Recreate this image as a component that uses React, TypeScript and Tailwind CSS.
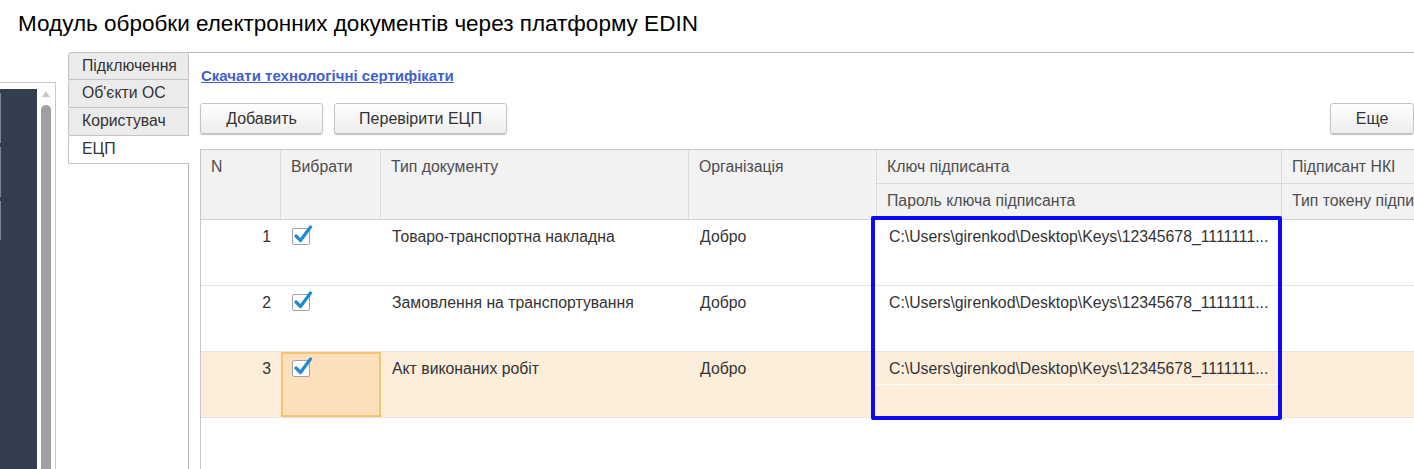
import React from 'react';

const cols = 'grid grid-cols-[80px_100px_308px_188px_405px_240px]';

type Row = {
    n: number;
    doc: string;
    selected?: boolean;
};

const rows: Row[] = [
    { n: 1, doc: 'Товаро-транспортна накладна' },
    { n: 2, doc: 'Замовлення на транспортування' },
    { n: 3, doc: 'Акт виконаних робіт', selected: true },
];

const keyPath = 'C:\\Users\\girenkod\\Desktop\\Keys\\12345678_1111111...';

function Checkbox() {
    return (
        <div className="relative w-[18px] h-[17px] rounded-[2px] border border-[#a3a3a3] bg-white">
            <svg className="absolute -left-px -top-[5px]" width="24" height="24" viewBox="0 0 24 24">
                <path d="M4 12 L8.5 16.5 L18.5 3" fill="none" stroke="#1c8ad6" strokeWidth="3.2" strokeLinecap="round" strokeLinejoin="round" />
            </svg>
        </div>
    );
}

function Button(props: { children: React.ReactNode; className?: string }) {
    return (
        <button
            className={
                'h-[31px] rounded-[3px] border border-[#c4c4c4] bg-gradient-to-b from-white to-[#ededed] text-[16px] text-[#333] shadow-[0_1px_1px_rgba(0,0,0,0.25)] ' +
                (props.className ?? '')
            }
        >
            {props.children}
        </button>
    );
}

function TableRow({ row }: { row: Row }) {
    const bg = row.selected ? 'bg-[#fdeedc]' : 'bg-white';
    return (
        <div className={`${cols} h-[66px] border-b border-[#e3e3e3] ${bg} text-[15.8px] leading-[18px] text-[#333]`}>
            <div className="pt-[8px] pr-[10px] text-right">{row.n}</div>
            <div className={row.selected ? 'px-[9px] pt-[6px] bg-[#fce0bb] border-2 border-[#f7c46f]' : 'px-[11px] pt-[8px]'}>
                <Checkbox />
            </div>
            <div className="pt-[8px] pl-[11px] whitespace-nowrap">{row.doc}</div>
            <div className="pt-[8px] pl-[11px]">Добро</div>
            <div className="flex flex-col">
                <div className={`h-[33px] pt-[8px] pl-[12px] whitespace-nowrap overflow-hidden ${row.selected ? 'border-b border-white' : ''}`}>
                    {keyPath}
                </div>
                <div className="flex-1" />
            </div>
            <div />
        </div>
    );
}

export default function App() {
    return (
        <div className="w-[1414px] h-[469px] overflow-hidden bg-white font-['Liberation_Sans',Arial,sans-serif]">
            <div className="h-[52px] pl-[18px] pt-[10px] text-[22.5px] leading-[28px] text-black whitespace-nowrap">
                Модуль обробки електронних документів через платформу EDIN
            </div>

            <div className="flex h-[417px]">
                {/* left collapsed panel */}
                <div className="w-[56px] mt-[30px] border-t border-r border-[#c9c9c9] flex pt-[6px]">
                    <div className="w-[37px] bg-[#333f4f] flex flex-col pt-[4px] gap-[4px]">
                        <div className="h-[50px] border-l border-[#7d8793]" />
                        <div className="h-[50px] border-l border-[#7d8793]" />
                        <div className="h-[39px] border-l border-[#7d8793]" />
                    </div>
                    <div className="w-[18px] flex flex-col items-center">
                        <svg className="mt-[2px]" width="8" height="6" viewBox="0 0 8 6">
                            <path d="M4 0 L8 6 L0 6 Z" fill="#c6c6c6" />
                        </svg>
                        <div className="mt-[8px] w-[10px] flex-1 rounded-t-[5px] bg-[#a0a0a0]" />
                    </div>
                </div>

                {/* tabs */}
                <div className="ml-[12px] w-[121px] flex flex-col text-[15.8px] leading-[18px] text-[#333]">
                    <div className="h-[28px] pl-[13px] pt-[4px] bg-[#ebebeb] border border-[#c3c3c3] rounded-tl-[3px] whitespace-nowrap">Підключення</div>
                    <div className="h-[28px] pl-[13px] pt-[4px] bg-[#ebebeb] border border-t-0 border-[#c3c3c3] rounded-l-[2px] whitespace-nowrap">Об'єкти ОС</div>
                    <div className="h-[28px] pl-[13px] pt-[4px] bg-[#ebebeb] border border-t-0 border-[#c3c3c3] rounded-l-[2px] whitespace-nowrap">Користувач</div>
                    <div className="h-[28px] pl-[13px] pt-[4px] bg-white border-l border-b border-[#c3c3c3] rounded-l-[2px]">ЕЦП</div>
                    <div className="flex-1 border-r border-[#b3b3b3]" />
                </div>

                {/* content */}
                <div className="flex-1 border-t border-[#b3b3b3] pl-[11px] pt-[14px] overflow-hidden">
                    <a className="block ml-px text-[15px] font-bold leading-[18px] text-[#3f5fcf] underline whitespace-nowrap">
                        Скачати технологічні сертифікати
                    </a>

                    <div className="flex mt-[18px] gap-[11px]">
                        <Button className="w-[123px]">Добавить</Button>
                        <Button className="w-[173px]">Перевірити ЕЦП</Button>
                        <Button className="ml-auto w-[84px]">Еще</Button>
                    </div>

                    <div className="relative mt-[15px] h-[400px] border-l border-t border-[#c6c6c6] text-[15.8px] leading-[18px]">
                        {/* header */}
                        <div className={`${cols} grid-rows-[34px_35px] bg-[#f2f2f2] text-[#4d4d4d] border-b border-[#d4d4d4]`}>
                            <div className="row-span-2 pl-[10px] pt-[8px] border-r border-[#dadada]">N</div>
                            <div className="row-span-2 pl-[10px] pt-[8px] border-r border-[#dadada]">Вибрати</div>
                            <div className="row-span-2 pl-[10px] pt-[8px] border-r border-[#dadada]">Тип документу</div>
                            <div className="row-span-2 pl-[10px] pt-[8px] border-r border-[#dadada]">Організація</div>
                            <div className="pl-[10px] pt-[8px] border-r border-b border-[#dadada]">Ключ підписанта</div>
                            <div className="pl-[10px] pt-[8px] border-b border-[#dadada] whitespace-nowrap">Підписант НКІ</div>
                            <div className="pl-[10px] pt-[8px] border-r border-[#dadada]">Пароль ключа підписанта</div>
                            <div className="pl-[10px] pt-[8px] whitespace-nowrap overflow-hidden">Тип токену підписанта</div>
                        </div>

                        {rows.map((r) => (
                            <TableRow key={r.n} row={r} />
                        ))}

                        {/* highlight annotation */}
                        <div className="absolute left-[670px] top-[66px] w-[411px] h-[204px] border-4 border-[#0a0af5] rounded-[2px]" />
                    </div>
                </div>
            </div>
        </div>
    );
}
